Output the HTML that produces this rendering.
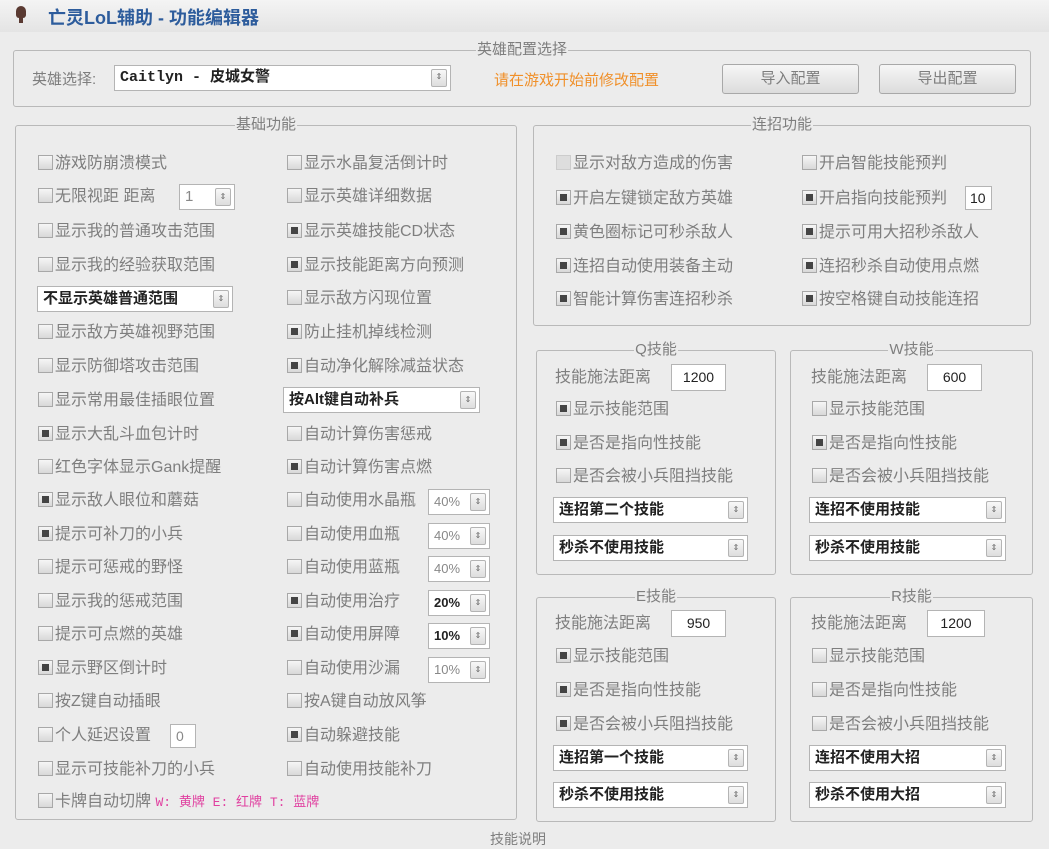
<!DOCTYPE html>
<html><head><meta charset="utf-8"><style>
*{margin:0;padding:0;box-sizing:border-box}
body{width:1049px;height:837px;overflow:hidden;background:#ececec;font-family:"Liberation Sans","Noto Sans CJK SC",sans-serif;color:#7e7e7e;font-size:16px;position:relative}
.tb{position:absolute;left:0;top:0;width:1049px;height:32px;background:linear-gradient(#f4f4f4,#e4e4e4)}
.tt{position:absolute;left:48px;top:4px;font-size:18px;font-weight:bold;color:#2d5c9c}
.g{position:absolute;border:1px solid #b9b9b9;border-radius:3px}
.gl{position:absolute;top:-11px;left:0;right:0;text-align:center;font-size:15px;line-height:20px}
.gl span{background:#ececec;padding:0 1px}
.c{position:absolute;white-space:nowrap;line-height:20px;height:20px}
.c i{display:inline-block;width:15px;height:15px;border:1px solid #a8a8a8;background:linear-gradient(#f6f6f6,#d8d8d8);vertical-align:-2px;margin-right:2px;position:relative}
.c.k i:after{content:"";position:absolute;left:3px;top:3px;width:7px;height:7px;background:#444}
.sel{position:absolute;height:26px;border:1px solid #b4b4b4;background:#fff;color:#222;font-weight:bold;font-size:15px;line-height:24px;padding-left:5px;white-space:nowrap}
.sel b{position:absolute;right:3px;top:3px;width:16px;height:18px;border:1px solid #b4b4b4;border-radius:2px;background:linear-gradient(#f8f8f8,#ddd);font-size:8px;line-height:16px;text-align:center;color:#666;font-weight:normal}
.in{position:absolute;height:24px;border:1px solid #b4b4b4;background:#fff;color:#222;font-size:14px;line-height:22px;padding-left:5px}
.btn{position:absolute;height:30px;border:1px solid #a8a8a8;border-radius:3px;background:linear-gradient(#f6f6f6,#dcdcdc);text-align:center;line-height:28px;font-size:15px}
</style></head><body>
<div class="tb"></div>
<div style="position:absolute;left:16px;top:6px;width:10px;height:12px;border-radius:5px 5px 3px 3px;background:#5a3a32"></div>
<div style="position:absolute;left:19px;top:17px;width:4px;height:6px;background:#5a3a32"></div>
<div class="tt">亡灵LoL辅助 - 功能编辑器</div>

<div class="g" style="left:13px;top:50px;width:1018px;height:57px"><div class="gl"><span>英雄配置选择</span></div></div>
<div class="c" style="left:32px;top:70px;font-size:15px">英雄选择:</div>
<div class="sel" style="left:114px;top:65px;width:337px;font-family:'Liberation Mono','Noto Sans CJK SC',monospace">Caitlyn - 皮城女警<b>⇕</b></div>
<div class="c" style="left:494px;top:71px;color:#f0902a;font-size:15px">请在游戏开始前修改配置</div>
<div class="btn" style="left:722px;top:64px;width:137px">导入配置</div>
<div class="btn" style="left:879px;top:64px;width:137px">导出配置</div>

<div class="g" style="left:15px;top:125px;width:502px;height:695px"><div class="gl"><span>基础功能</span></div></div>
<div class="g" style="left:533px;top:125px;width:498px;height:201px"><div class="gl"><span>连招功能</span></div></div>
<div class="g" style="left:536px;top:350px;width:240px;height:225px"><div class="gl"><span>Q技能</span></div></div>
<div class="g" style="left:790px;top:350px;width:243px;height:225px"><div class="gl"><span>W技能</span></div></div>
<div class="g" style="left:536px;top:597px;width:240px;height:225px"><div class="gl"><span>E技能</span></div></div>
<div class="g" style="left:790px;top:597px;width:243px;height:225px"><div class="gl"><span>R技能</span></div></div>

<!-- left col 1 -->
<div class="c" style="left:38px;top:154px"><i></i>游戏防崩溃模式</div>
<div class="c" style="left:38px;top:187px"><i></i>无限视距 距离</div>
<div class="sel" style="left:179px;top:184px;width:56px;font-weight:normal;color:#888">1<b>⇕</b></div>
<div class="c" style="left:38px;top:222px"><i></i>显示我的普通攻击范围</div>
<div class="c" style="left:38px;top:256px"><i></i>显示我的经验获取范围</div>
<div class="sel" style="left:37px;top:286px;width:196px">不显示英雄普通范围<b>⇕</b></div>
<div class="c" style="left:38px;top:323px"><i></i>显示敌方英雄视野范围</div>
<div class="c" style="left:38px;top:357px"><i></i>显示防御塔攻击范围</div>
<div class="c" style="left:38px;top:391px"><i></i>显示常用最佳插眼位置</div>
<div class="c k" style="left:38px;top:425px"><i></i>显示大乱斗血包计时</div>
<div class="c" style="left:38px;top:458px"><i></i>红色字体显示Gank提醒</div>
<div class="c k" style="left:38px;top:491px"><i></i>显示敌人眼位和蘑菇</div>
<div class="c k" style="left:38px;top:525px"><i></i>提示可补刀的小兵</div>
<div class="c" style="left:38px;top:558px"><i></i>提示可惩戒的野怪</div>
<div class="c" style="left:38px;top:592px"><i></i>显示我的惩戒范围</div>
<div class="c" style="left:38px;top:625px"><i></i>提示可点燃的英雄</div>
<div class="c k" style="left:38px;top:659px"><i></i>显示野区倒计时</div>
<div class="c" style="left:38px;top:692px"><i></i>按Z键自动插眼</div>
<div class="c" style="left:38px;top:726px"><i></i>个人延迟设置</div>
<div class="in" style="left:170px;top:724px;width:26px;color:#888">0</div>
<div class="c" style="left:38px;top:760px"><i></i>显示可技能补刀的小兵</div>
<div class="c" style="left:38px;top:792px"><i></i>卡牌自动切牌 <span style="color:#e040a0;font-size:13px;font-family:'Liberation Mono','Noto Sans CJK SC',monospace">W: 黄牌 E: 红牌 T: 蓝牌</span></div>

<!-- left col 2 -->
<div class="c" style="left:287px;top:154px"><i></i>显示水晶复活倒计时</div>
<div class="c" style="left:287px;top:187px"><i></i>显示英雄详细数据</div>
<div class="c k" style="left:287px;top:222px"><i></i>显示英雄技能CD状态</div>
<div class="c k" style="left:287px;top:256px"><i></i>显示技能距离方向预测</div>
<div class="c" style="left:287px;top:289px"><i></i>显示敌方闪现位置</div>
<div class="c k" style="left:287px;top:323px"><i></i>防止挂机掉线检测</div>
<div class="c k" style="left:287px;top:357px"><i></i>自动净化解除减益状态</div>
<div class="sel" style="left:283px;top:387px;width:197px">按Alt键自动补兵<b>⇕</b></div>
<div class="c" style="left:287px;top:425px"><i></i>自动计算伤害惩戒</div>
<div class="c k" style="left:287px;top:458px"><i></i>自动计算伤害点燃</div>
<div class="c" style="left:287px;top:491px"><i></i>自动使用水晶瓶</div>
<div class="c" style="left:287px;top:525px"><i></i>自动使用血瓶</div>
<div class="c" style="left:287px;top:558px"><i></i>自动使用蓝瓶</div>
<div class="c k" style="left:287px;top:592px"><i></i>自动使用治疗</div>
<div class="c k" style="left:287px;top:625px"><i></i>自动使用屏障</div>
<div class="c" style="left:287px;top:659px"><i></i>自动使用沙漏</div>
<div class="sel" style="left:428px;top:489px;width:62px;font-size:13px;font-weight:normal;color:#888">40%<b>⇕</b></div>
<div class="sel" style="left:428px;top:523px;width:62px;font-size:13px;font-weight:normal;color:#888">40%<b>⇕</b></div>
<div class="sel" style="left:428px;top:556px;width:62px;font-size:13px;font-weight:normal;color:#888">40%<b>⇕</b></div>
<div class="sel" style="left:428px;top:590px;width:62px;font-size:13px">20%<b>⇕</b></div>
<div class="sel" style="left:428px;top:623px;width:62px;font-size:13px">10%<b>⇕</b></div>
<div class="sel" style="left:428px;top:657px;width:62px;font-size:13px;font-weight:normal;color:#888">10%<b>⇕</b></div>
<div class="c" style="left:287px;top:692px"><i></i>按A键自动放风筝</div>
<div class="c k" style="left:287px;top:726px"><i></i>自动躲避技能</div>
<div class="c" style="left:287px;top:760px"><i></i>自动使用技能补刀</div>

<!-- combo -->
<div class="c" style="left:556px;top:154px"><i style="border-color:#ccc;background:#ddd"></i>显示对敌方造成的伤害</div>
<div class="c k" style="left:556px;top:189px"><i></i>开启左键锁定敌方英雄</div>
<div class="c k" style="left:556px;top:223px"><i></i>黄色圈标记可秒杀敌人</div>
<div class="c k" style="left:556px;top:257px"><i></i>连招自动使用装备主动</div>
<div class="c k" style="left:556px;top:290px"><i></i>智能计算伤害连招秒杀</div>
<div class="c" style="left:802px;top:154px"><i></i>开启智能技能预判</div>
<div class="c k" style="left:802px;top:189px"><i></i>开启指向技能预判</div>
<div class="in" style="left:965px;top:186px;width:27px;padding-left:4px">10</div>
<div class="c k" style="left:802px;top:223px"><i></i>提示可用大招秒杀敌人</div>
<div class="c k" style="left:802px;top:257px"><i></i>连招秒杀自动使用点燃</div>
<div class="c k" style="left:802px;top:290px"><i></i>按空格键自动技能连招</div>

<!-- Q -->
<div class="c" style="left:555px;top:368px">技能施法距离</div>
<div class="in" style="left:671px;top:364px;width:55px;height:27px;text-align:center;padding:0;line-height:25px">1200</div>
<div class="c k" style="left:556px;top:400px"><i></i>显示技能范围</div>
<div class="c k" style="left:556px;top:434px"><i></i>是否是指向性技能</div>
<div class="c" style="left:556px;top:467px"><i></i>是否会被小兵阻挡技能</div>
<div class="sel" style="left:553px;top:497px;width:195px">连招第二个技能<b>⇕</b></div>
<div class="sel" style="left:553px;top:535px;width:195px">秒杀不使用技能<b>⇕</b></div>
<!-- W -->
<div class="c" style="left:811px;top:368px">技能施法距离</div>
<div class="in" style="left:927px;top:364px;width:55px;height:27px;text-align:center;padding:0;line-height:25px">600</div>
<div class="c" style="left:812px;top:400px"><i></i>显示技能范围</div>
<div class="c k" style="left:812px;top:434px"><i></i>是否是指向性技能</div>
<div class="c" style="left:812px;top:467px"><i></i>是否会被小兵阻挡技能</div>
<div class="sel" style="left:809px;top:497px;width:197px">连招不使用技能<b>⇕</b></div>
<div class="sel" style="left:809px;top:535px;width:197px">秒杀不使用技能<b>⇕</b></div>
<!-- E -->
<div class="c" style="left:555px;top:614px">技能施法距离</div>
<div class="in" style="left:671px;top:610px;width:55px;height:27px;text-align:center;padding:0;line-height:25px">950</div>
<div class="c k" style="left:556px;top:647px"><i></i>显示技能范围</div>
<div class="c k" style="left:556px;top:681px"><i></i>是否是指向性技能</div>
<div class="c k" style="left:556px;top:715px"><i></i>是否会被小兵阻挡技能</div>
<div class="sel" style="left:553px;top:745px;width:195px">连招第一个技能<b>⇕</b></div>
<div class="sel" style="left:553px;top:782px;width:195px">秒杀不使用技能<b>⇕</b></div>
<!-- R -->
<div class="c" style="left:811px;top:614px">技能施法距离</div>
<div class="in" style="left:927px;top:610px;width:58px;height:27px;text-align:center;padding:0;line-height:25px">1200</div>
<div class="c" style="left:812px;top:647px"><i></i>显示技能范围</div>
<div class="c" style="left:812px;top:681px"><i></i>是否是指向性技能</div>
<div class="c" style="left:812px;top:715px"><i></i>是否会被小兵阻挡技能</div>
<div class="sel" style="left:809px;top:745px;width:197px">连招不使用大招<b>⇕</b></div>
<div class="sel" style="left:809px;top:782px;width:197px">秒杀不使用大招<b>⇕</b></div>

<div class="c" style="left:490px;top:829px;font-size:14px">技能说明</div>
</body></html>
